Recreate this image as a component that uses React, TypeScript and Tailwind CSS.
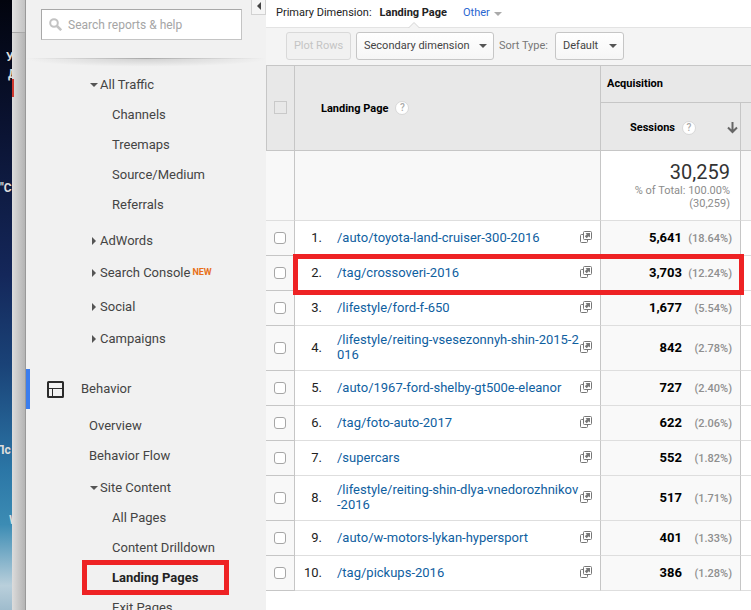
import React from "react";

type Row = { url: string; sessions: string; share: string; highlighted?: boolean };

const rows: Row[] = [
  { url: "/auto/toyota-land-cruiser-300-2016", sessions: "5,641", share: "(18.64%)" },
  { url: "/tag/crossoveri-2016", sessions: "3,703", share: "(12.24%)", highlighted: true },
  { url: "/lifestyle/ford-f-650", sessions: "1,677", share: "(5.54%)" },
  { url: "/lifestyle/reiting-vsesezonnyh-shin-2015-2016", sessions: "842", share: "(2.78%)" },
  { url: "/auto/1967-ford-shelby-gt500e-eleanor", sessions: "727", share: "(2.40%)" },
  { url: "/tag/foto-auto-2017", sessions: "622", share: "(2.06%)" },
  { url: "/supercars", sessions: "552", share: "(1.82%)" },
  { url: "/lifestyle/reiting-shin-dlya-vnedorozhnikov-2016", sessions: "517", share: "(1.71%)" },
  { url: "/auto/w-motors-lykan-hypersport", sessions: "401", share: "(1.33%)" },
  { url: "/tag/pickups-2016", sessions: "386", share: "(1.28%)" },
];

function Help() {
  return (
    <button
      type="button"
      aria-label="Help"
      className="flex size-[14px] items-center justify-center rounded-full border border-[#d8d8d8] bg-white text-[10px] leading-none font-medium text-[#aaa]"
    >
      ?
    </button>
  );
}

function Caret({ className }: { className: string }) {
  return (
    <svg viewBox="0 0 8 4" className={`h-1 w-2 shrink-0 ${className}`} aria-hidden="true">
      <path d="M0 0h8L4 4z" fill="currentColor" />
    </svg>
  );
}

function OpenIcon() {
  return (
    <svg viewBox="0 0 12 12" className="block size-3" fill="none" stroke="#777" aria-hidden="true">
      <rect x="3.5" y="0.5" width="8" height="8" rx="1" />
      <path d="M3.5 3.5h-2a1 1 0 0 0-1 1v6a1 1 0 0 0 1 1h5a1 1 0 0 0 1-1v-2" />
      <path d="M5.500 2h4.500v4.500L8.700 5.200 6.700 7.200 4.800 5.300 6.800 3.300z" fill="#777" stroke="none" />
    </svg>
  );
}

function NavGroup({ label, open, isNew, tall }: { label: string; open?: boolean; isNew?: boolean; tall?: boolean }) {
  return (
    <a href="#" className={`flex items-center pl-[63px] ${tall ? "h-8" : "h-[30px]"}`}>
      <span className="flex w-[11px] items-center pl-px text-[#555]">
        {open ? (
          <Caret className="" />
        ) : (
          <svg viewBox="0 0 4 8" className="ml-0.5 h-2 w-1" aria-hidden="true">
            <path d="M0 0v8l4-4z" fill="currentColor" />
          </svg>
        )}
      </span>
      {label}
      {isNew && <span className="ml-0.5 pb-[3px] text-[9px] leading-3 font-bold text-[#e8701a]">NEW</span>}
    </a>
  );
}

function NavItem({ label, active }: { label: string; active?: boolean }) {
  return (
    <a
      href="#"
      className={`relative flex h-[30px] items-center pl-[86px] ${active ? "font-bold text-[#222]" : ""}`}
    >
      {label}
      {active && <span className="absolute -top-[3px] right-[37px] -bottom-0.5 left-14 border-5 border-[#ee2224]" />}
    </a>
  );
}

function Desktop() {
  return (
    <div
      aria-hidden="true"
      className="relative w-3 shrink-0 overflow-hidden bg-[linear-gradient(#02040e_0%,#0a1230_20%,#14275a_45%,#1a4378_60%,#2b76a6_77%,#3c8cb4_86%,#b9cfdb_96%,#9fbccd_100%)] text-[12px] leading-4 font-bold text-[#ddd]"
    >
      <span className="absolute top-[49px] left-1.5">У</span>
      <span className="absolute top-[66px] left-2">Д</span>
      <span className="absolute top-[180px] left-0">"С</span>
      <span className="absolute top-[442px] -left-1">Пс</span>
      <span className="absolute top-[512px] left-[9px]">W</span>
    </div>
  );
}

function Sidebar() {
  return (
    <nav className="relative w-60 shrink-0 overflow-hidden bg-[#f1f1f1] text-[13px] leading-4 text-[#444]">
      <button
        type="button"
        aria-label="Collapse navigation"
        className="absolute -top-2 right-0 flex h-[23px] w-[15px] items-center justify-center border border-[#d2d2d2] bg-[#f5f5f5] pt-1"
      >
        <svg viewBox="0 0 4 8" className="h-2 w-1" aria-hidden="true">
          <path d="M4 0v8L0 4z" fill="#444" />
        </svg>
      </button>
      <div className="pt-[9px] pr-6 pl-[15px]">
        <label className="flex h-[31px] items-center gap-1.5 border border-[#c4c4c4] border-t-[#a8a8a8] border-l-[#a8a8a8] bg-white pl-[7px]">
          <svg viewBox="0 0 13 13" className="size-[13px] shrink-0" fill="none" stroke="#c3c3c3" aria-hidden="true">
            <circle cx="5" cy="5" r="3.800" strokeWidth="2" />
            <path d="M8 8l4.200 4.200" strokeWidth="2.600" />
          </svg>
          <input
            type="text"
            aria-label="Search reports & help"
            placeholder="Search reports & help"
            className="w-full min-w-0 bg-transparent text-[12px] outline-none placeholder:text-[#a5a5a5]"
          />
        </label>
      </div>
      <div className="mt-[18px] h-px bg-linear-to-r from-transparent via-[#a9a9a9] to-transparent" />
      <div className="h-[11px] bg-[radial-gradient(ellipse_50%_70%_at_50%_0%,#d2d2d2,transparent)]" />

      <NavGroup label="All Traffic" open />
      <NavItem label="Channels" />
      <NavItem label="Treemaps" />
      <NavItem label="Source/Medium" />
      <NavItem label="Referrals" />
      <div className="pt-[5px]">
        <NavGroup label="AdWords" tall />
        <NavGroup label="Search Console" tall isNew />
      </div>
      <div className="pt-0.5">
        <NavGroup label="Social" tall />
        <NavGroup label="Campaigns" tall />
      </div>
      <a href="#" className="mt-[14px] flex h-10 items-center border-l-4 border-[#3b7ded] pl-[17px]">
        <svg viewBox="0 0 17 17" className="size-[17px]" fill="none" stroke="#2b2b2b" aria-hidden="true">
          <rect x="1" y="1" width="15" height="15" rx="0.500" strokeWidth="2" />
          <path d="M1 7.500h15M5.500 8v8" />
        </svg>
        <span className="ml-[17px]">Behavior</span>
      </a>
      <div className="py-0.5">
        <a href="#" className="flex h-[30px] items-center pl-[63px]">Overview</a>
        <a href="#" className="flex h-[30px] items-center pl-[63px]">Behavior Flow</a>
      </div>
      <NavGroup label="Site Content" open />
      <NavItem label="All Pages" />
      <NavItem label="Content Drilldown" />
      <NavItem label="Landing Pages" active />
      <NavItem label="Exit Pages" />
    </nav>
  );
}

function Toolbar() {
  const control = "h-7 rounded-[3px] border border-[#c6c6c6] text-[11px]";
  return (
    <>
      <div className="flex h-[28px] items-center border-b border-[#e3e3e3] pl-[10px] text-[11px] text-[#222]">
        <span>Primary Dimension:</span>
        <a href="#" className="relative ml-2 font-bold">
          Landing Page
          <svg viewBox="0 0 12 6" className="absolute top-[17px] left-[28px] h-1.5 w-3" aria-hidden="true">
            <path d="M0.500 6L6 0.500 11.500 6" fill="#f4f4f4" stroke="#d4d4d4" />
          </svg>
        </a>
        <button type="button" className="ml-4 flex items-center gap-1 text-[#2a66d0]">
          Other <Caret className="text-[#aaa]" />
        </button>
      </div>
      <div className="flex h-[37px] items-center bg-[#f4f4f4] pb-px pl-5">
        <button type="button" disabled className="h-7 w-[65px] rounded-[3px] border border-[#d9d9d9] bg-[#f1f1f1] text-[11px] text-[#c4c4c4]">
          Plot Rows
        </button>
        <div className="relative ml-[5px] flex items-center">
          <select aria-label="Secondary dimension" className={`${control} w-[138px] appearance-none bg-linear-to-b from-white to-[#f6f6f6] pl-[7px] text-[#444]`}>
            <option>Secondary dimension</option>
          </select>
          <Caret className="pointer-events-none absolute right-[7px] text-[#555]" />
        </div>
        <label className="ml-[5px] flex items-center text-[11px] text-[#777]">
          <span className="w-14">Sort Type:</span>
          <span className="relative flex items-center">
            <select className={`${control} w-[69px] appearance-none bg-linear-to-b from-white to-[#f6f6f6] pl-[7px] text-[#444]`}>
              <option>Default</option>
            </select>
            <Caret className="pointer-events-none absolute right-[7px] text-[#555]" />
          </span>
        </label>
      </div>
    </>
  );
}

function ReportTable() {
  return (
    <table className="w-full table-fixed border-separate border-spacing-0 text-[13px] leading-[15px] text-[#222]">
      <colgroup>
        <col className="w-[29px]" />
        <col />
        <col className="w-[140px]" />
        <col className="w-[10px]" />
      </colgroup>
      <thead className="bg-[#e8e8e8] text-left text-[11px] text-black">
        <tr className="h-[38px]">
          <th rowSpan={2} className="border-y border-r border-l border-[#c6c6c6] p-0 pb-0.5">
            <input type="checkbox" aria-label="Select all rows" className="ml-[7px] block size-[13px] appearance-none border border-[#c9c9c9]" />
          </th>
          <th rowSpan={2} className="border-y border-r border-[#c6c6c6] p-0 pl-[26px]">
            <span className="flex items-center gap-[7px]">
              Landing Page <Help />
            </span>
          </th>
          <th colSpan={2} className="border-y border-[#c6c6c6] p-0 pb-0.5 pl-1.5">Acquisition</th>
        </tr>
        <tr className="h-[48px]">
          <th className="border-r border-b border-[#c6c6c6] p-0 pr-0.5 pl-[29px]">
            <span className="flex items-center gap-[7px] pt-0.5">
              Sessions <Help />
              <svg viewBox="0 0 11 12" className="ml-auto h-3 w-[11px]" fill="none" stroke="#666" strokeWidth="2" aria-hidden="true">
                <path d="M5.500 0v10M1 5.500l4.500 4.500 4.500-4.500" />
              </svg>
            </span>
          </th>
          <th className="border-b border-[#c6c6c6] p-0" />
        </tr>
      </thead>
      <tbody>
        <tr className="h-[70px]">
          <td className="border-r border-b border-r-[#c6c6c6] border-b-[#dedede] bg-[#f8f8f8] p-0" />
          <td className="border-r border-b border-r-[#c6c6c6] border-b-[#dedede] bg-[#f8f8f8] p-0" />
          <td className="border-r border-b border-r-[#c6c6c6] border-b-[#dedede] p-0 pr-[10px] pb-0.5 text-right text-[11px] leading-[13px] text-[#8c8c8c]">
            <div className="text-[20px] leading-6 text-[#333]">30,259</div>
            <div>% of Total: 100.00%</div>
            <div>(30,259)</div>
          </td>
          <td className="border-b border-[#dedede] bg-[#f8f8f8] p-0" />
        </tr>
        {rows.map((row, i) => (
          <tr key={row.url} className="relative h-[35px]">
            <td className="border-r border-b border-[#c6c6c6] bg-[#f8f8f8] p-0">
              <input
                type="checkbox"
                aria-label={`Select ${row.url}`}
                className="ml-2 block size-3 appearance-none rounded-[3px] border border-[#a6a6a6] bg-white"
              />
            </td>
            <td className="border-r border-b border-r-[#c6c6c6] border-b-[#dedede] pt-[6px] pr-2 pb-2 pl-0">
              <div className="flex items-center">
                <span className="w-[27px] shrink-0 text-right">{i + 1}.</span>
                <a href="#" className="ml-[15px] min-w-0 flex-1 break-all text-[#0f609f]">
                  {row.url}
                </a>
                <a href="#" aria-label={`Open ${row.url}`} className="shrink-0">
                  <OpenIcon />
                </a>
              </div>
              {row.highlighted && (
                <span className="pointer-events-none absolute -top-0.5 right-[7px] -bottom-1 left-[27px] z-10 border-5 border-[#ee2224]" />
              )}
            </td>
            <td className="border-r border-b border-r-[#c6c6c6] border-b-[#dedede] bg-[#f9f9f9] p-0 pr-2">
              <div className="flex items-baseline justify-end font-bold text-black">
                {row.sessions}
                <span className="w-[50px] text-right text-[11px] font-medium text-[#8f8f8f]">{row.share}</span>
              </div>
            </td>
            <td className="border-b border-[#dedede] p-0" />
          </tr>
        ))}
      </tbody>
    </table>
  );
}

export default function App() {
  return (
    <div className="flex h-screen overflow-hidden bg-white font-[Roboto,'Liberation_Sans',sans-serif]">
      <Desktop />
      <div className="w-[14px] shrink-0 border-r border-[#999] bg-linear-to-r from-[#dcdcdc] to-[#b4b4b4]">
        <div className="box-content h-8 border-b border-[#a8a8a8] bg-white/20" />
        <div className="mt-[46px] h-[18px] w-0.5 bg-[#d0392f]" />
      </div>
      <Sidebar />
      <main className="min-w-0 flex-1">
        <Toolbar />
        <ReportTable />
      </main>
    </div>
  );
}
